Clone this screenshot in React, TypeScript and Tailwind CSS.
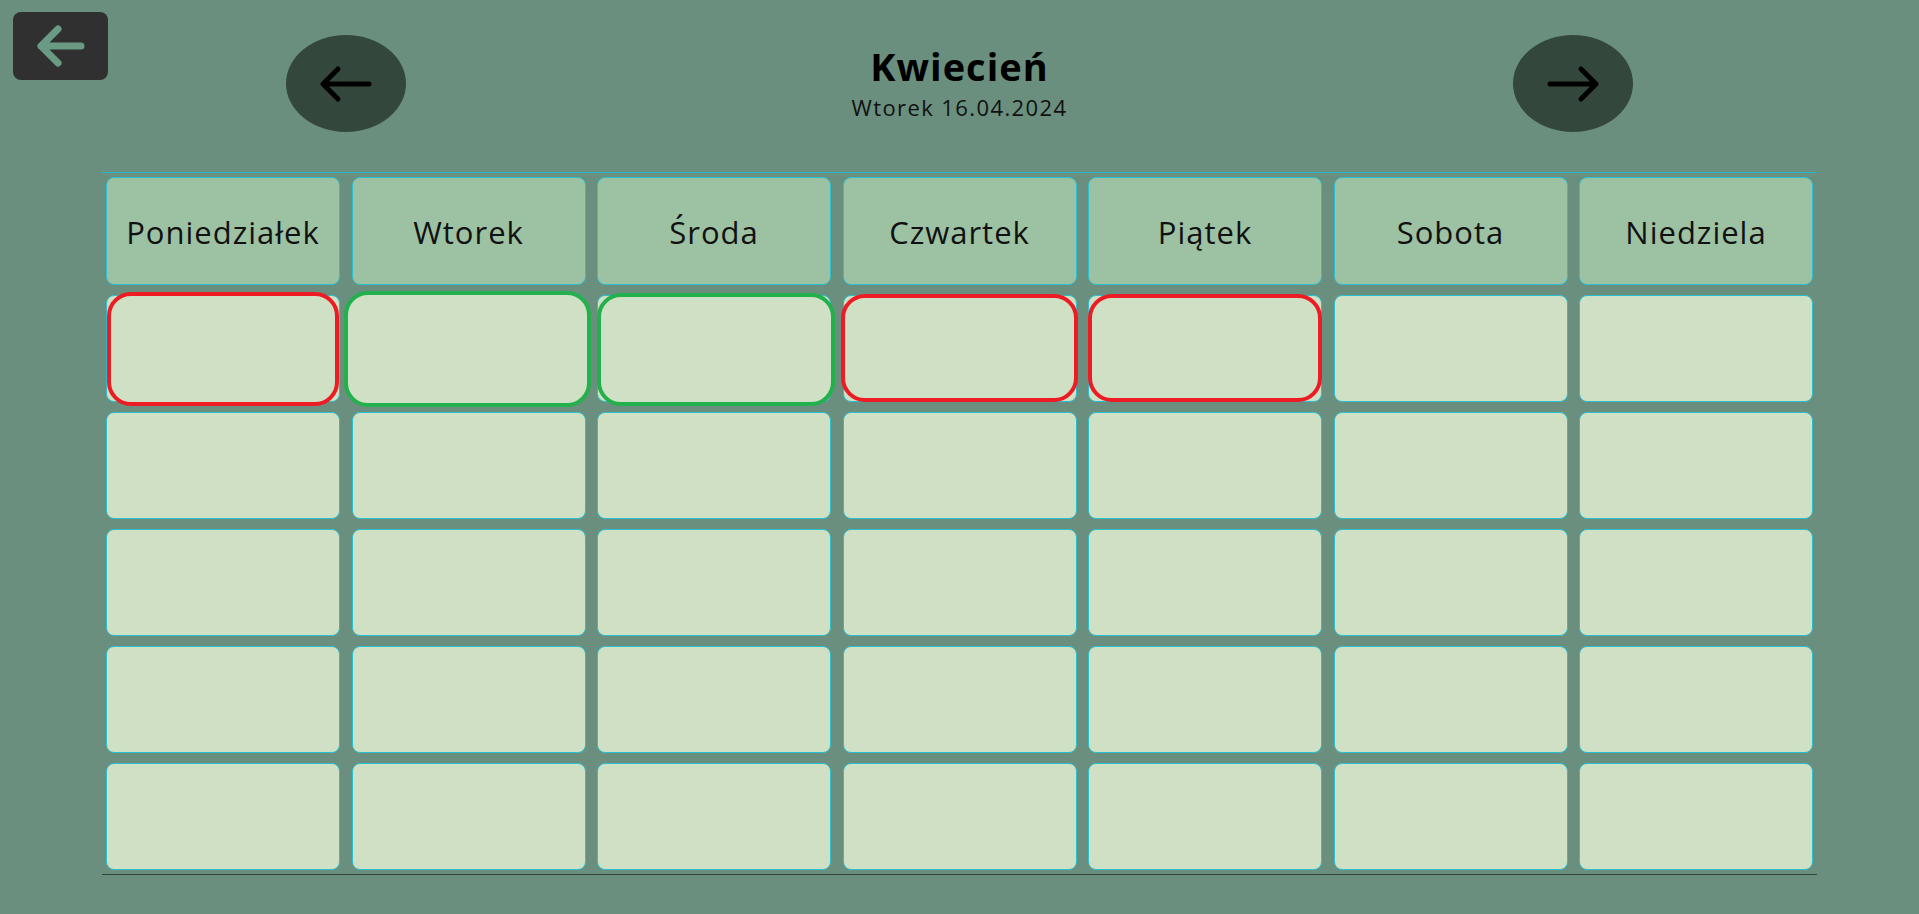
import { ReactNode } from 'react'

const DAYS = ['Poniedziałek', 'Wtorek', 'Środa', 'Czwartek', 'Piątek', 'Sobota', 'Niedziela']

// first week: frames drawn around the days that already have a status
const MARKS: Record<number, { color: string; pos: string }> = {
  0: { color: 'border-[#ed1c24]', pos: '-top-[4px] -bottom-[5px] left-0 right-0' },
  1: { color: 'border-[#22b14c]', pos: '-top-[5px] -bottom-[6px] -left-[9px] -right-[6px]' },
  2: { color: 'border-[#22b14c]', pos: '-top-[3px] -bottom-[5px] -left-[1px] -right-[5px]' },
  3: { color: 'border-[#ed1c24]', pos: '-top-[2px] -bottom-[1px] -left-[3px] -right-[2px]' },
  4: { color: 'border-[#ed1c24]', pos: '-top-[2px] -bottom-[1px] -left-[1px] -right-[1px]' },
}

function Arrow({ dir, className }: { dir: 'left' | 'right'; className?: string }) {
  return (
    <svg width="54" height="40" viewBox="0 0 54 40" fill="none" className={className}
      style={dir === 'right' ? { transform: 'scaleX(-1)' } : undefined}>
      <path d="M4 20H50M19 5L4 20L19 35" stroke="currentColor" strokeWidth="5"
        strokeLinecap="round" strokeLinejoin="round" />
    </svg>
  )
}

function NavButton({ children }: { children: ReactNode }) {
  return (
    <button className="flex h-[97px] w-[120px] items-center justify-center rounded-[50%] bg-[#34473c] text-black">
      {children}
    </button>
  )
}

export default function App() {
  return (
    <div className="relative min-h-screen bg-[#6a8f7e] font-['Open_Sans',sans-serif]">
      <button className="absolute left-[13px] top-[12px] flex h-[68px] w-[95px] items-center justify-center rounded-lg bg-[#303030]">
        <svg width="52" height="46" viewBox="0 0 52 46" fill="none" className="text-[#6a9a83]">
          <path d="M6 23H46M23 6L6 23L23 40" stroke="currentColor" strokeWidth="7"
            strokeLinecap="round" strokeLinejoin="round" />
        </svg>
      </button>

      <div className="mx-auto flex h-[132px] w-[1347px] items-center justify-between pt-[35px]">
        <NavButton><Arrow dir="left" /></NavButton>
        <div className="flex flex-col items-center pb-[6px]">
          <h1 className="text-[38px] font-bold leading-[52px] tracking-[1px] text-black">Kwiecień</h1>
          <p className="text-[22px] leading-[30px] tracking-[1.4px] text-[#111]">Wtorek 16.04.2024</p>
        </div>
        <NavButton><Arrow dir="right" /></NavButton>
      </div>

      <div className="mx-auto mt-[40px] w-[1715px] border-t border-b border-t-[#27b9c9] border-b-[#33443b] px-[4px] py-[4px]">
        <div className="grid grid-cols-7 gap-x-[11.5px] gap-y-[10px]">
          {DAYS.map(d => (
            <div key={d}
              className="flex h-[108px] items-center justify-center rounded-lg border border-[#2bbfd0] bg-[#9dc1a3] pt-[2px] text-[31px] tracking-[1px] text-[#111]">
              {d}
            </div>
          ))}
          {Array.from({ length: 35 }, (_, i) => {
            const mark = i < 7 ? MARKS[i] : undefined
            return (
              <div key={i} className="relative h-[107px] rounded-lg border border-[#2bbfd0] bg-[#d0e0c4]">
                {mark && (
                  <div className={`absolute rounded-[24px] border-4 bg-[#d0e0c4] ${mark.color} ${mark.pos}`} />
                )}
              </div>
            )
          })}
        </div>
      </div>
    </div>
  )
}
